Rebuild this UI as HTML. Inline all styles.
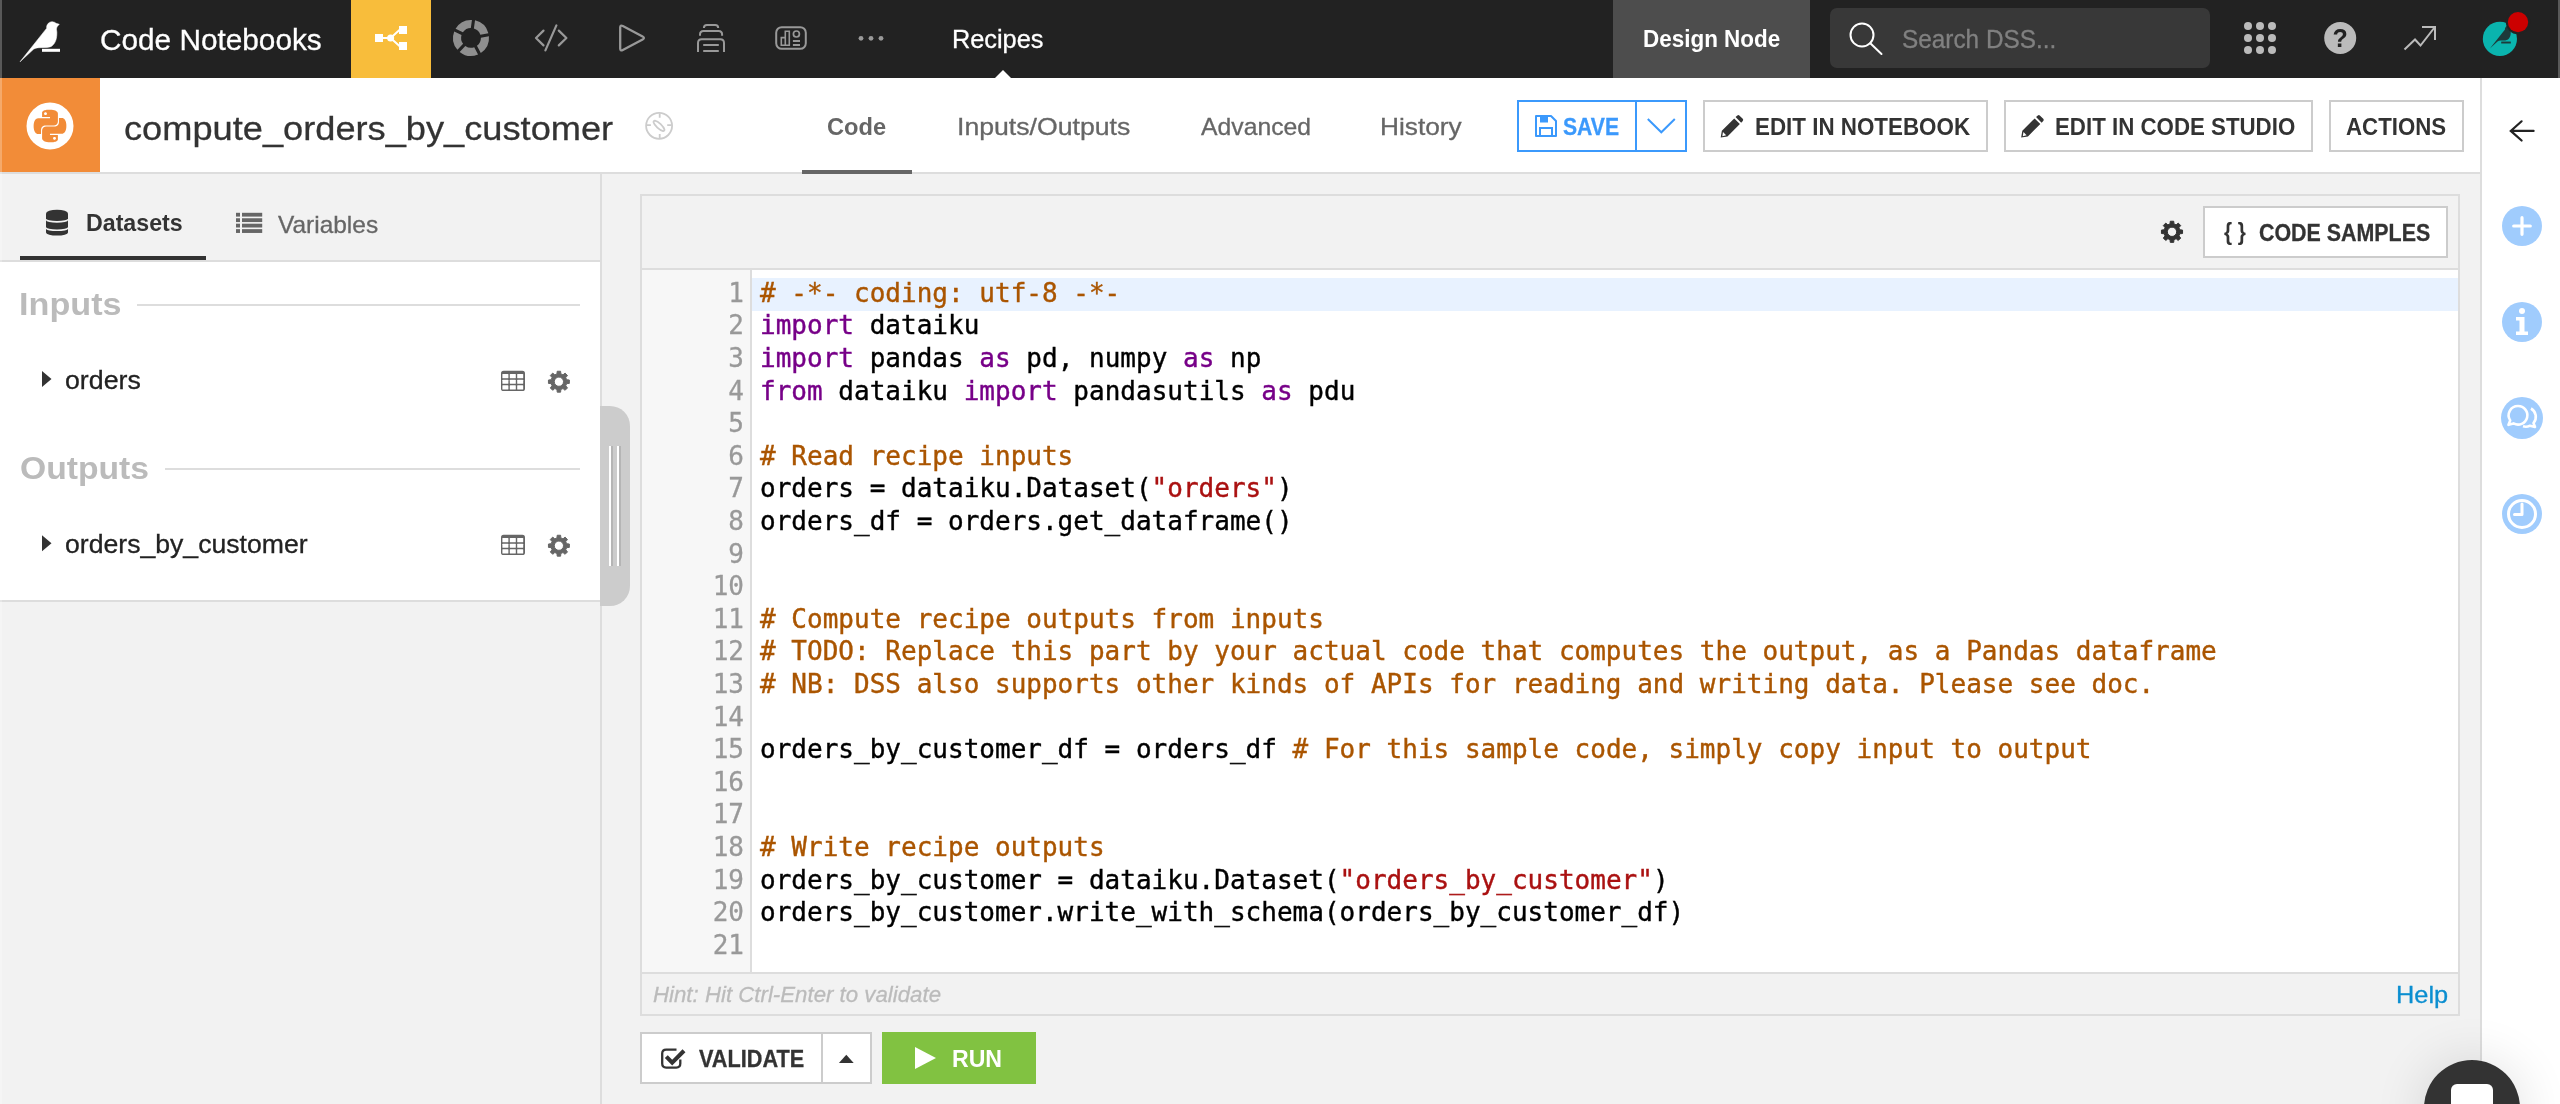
<!DOCTYPE html>
<html lang="en"><head><meta charset="utf-8"><title>compute_orders_by_customer | Dataiku</title>
<style>
*{box-sizing:border-box;margin:0;padding:0}
html,body{width:2560px;height:1104px;overflow:hidden}
#root{position:absolute;left:0;top:0;width:2560px;height:1104px;will-change:transform;overflow:hidden}
body{background:#f2f2f2;font-family:"Liberation Sans",sans-serif;position:relative;color:#333}
.a{position:absolute}
.t{position:absolute;white-space:pre;line-height:normal;transform-origin:0 50%;font-family:"Liberation Sans",sans-serif}
svg{position:absolute;overflow:visible}
#nav{left:0;top:0;width:2560px;height:78px;background:#222}
#flow{left:351px;top:0;width:80px;height:78px;background:#f8bd3b}
#dnode{left:1613px;top:0;width:197px;height:78px;background:#4d4d4d}
#search{left:1830px;top:8px;width:380px;height:60px;background:#383838;border-radius:7px}
#hdr{left:0;top:78px;width:2480px;height:96px;background:#fff;border-bottom:2px solid #ddd}
#ricon{left:0;top:78px;width:100px;height:94px;background:#f28c38}
#rpanel{left:2480px;top:78px;width:80px;height:1026px;background:#fff;border-left:2px solid #ddd}
#tabul{left:802px;top:170px;width:110px;height:4px;background:#666}
.btn{border:2px solid #ccc;background:#fff}
#bsave{left:1517px;top:100px;width:170px;height:52px;border:2px solid #3b99fc;background:#fff}
#bsavediv{left:1635px;top:100px;width:2px;height:52px;background:#3b99fc}
#bnb{left:1703px;top:100px;width:285px;height:52px}
#bcs{left:2004px;top:100px;width:309px;height:52px}
#bact{left:2329px;top:100px;width:135px;height:52px}
#lpanel{left:0;top:174px;width:602px;height:930px;border-right:2px solid #ddd}
#ltabs{left:0;top:174px;width:600px;height:88px;border-bottom:2px solid #ddd}
#ltabul{left:20px;top:256px;width:186px;height:4px;background:#333}
#lbody{left:0;top:262px;width:600px;height:340px;background:#fff;border-bottom:2px solid #ddd}
.hr{height:2px;background:#ddd}
#handle{left:600px;top:406px;width:30px;height:200px;background:#ccc;border-radius:0 20px 20px 0}
.hl{top:446px;height:120px;width:2px}
#ed{left:640px;top:194px;width:1820px;height:822px;border:2px solid #ddd}
#edtb{left:642px;top:268px;width:1816px;height:2px;background:#ddd}
#code{left:642px;top:270px;width:1816px;height:702px;background:#fff;overflow:hidden}
#gutter{left:0;top:0;width:110px;height:702px;background:#f7f7f7;border-right:2px solid #ddd}
#edbb{left:642px;top:972px;width:1816px;height:2px;background:#ddd}
#bcsamp{left:2203px;top:206px;width:245px;height:52px}
.ln{position:absolute;left:0;width:1816px;height:32.6px;font-family:"DejaVu Sans Mono","Liberation Mono",monospace;font-size:26px;line-height:32.6px;letter-spacing:0.011px}
.ln.act{background:linear-gradient(#e8f2ff,#e8f2ff) no-repeat 110px 0/1706px 100%}
.ln .no{position:absolute;left:0;top:-1.2px;-webkit-text-stroke:0.3px;width:102px;text-align:right;color:#999;white-space:pre}
.ln pre{position:absolute;left:118px;top:-1.2px;-webkit-text-stroke:0.4px;font:inherit;color:#000;white-space:pre}
.k{color:#770088}.c{color:#aa5500}.s{color:#aa1111}
#bval{left:640px;top:1032px;width:232px;height:52px}
#bvaldiv{left:821px;top:1032px;width:2px;height:52px;background:#ccc}
#brun{left:882px;top:1032px;width:154px;height:52px;background:#81c241}
#chat{left:2424px;top:1060px;width:96px;height:96px;border-radius:50%;background:#333;box-shadow:0 2px 50px 4px rgba(0,0,0,.11)}
#chati{left:2451px;top:1084px;width:42px;height:40px;border-radius:6px;background:#fff}
.edge{display:none}
#lstrip{left:0;top:0;width:2px;height:1104px;background:rgba(255,255,255,.25)}
#rstrip{left:2558px;top:0;width:2px;height:78px;background:rgba(255,255,255,.25)}
@media (max-width:1400px){html,body{width:1280px;height:552px}#root{zoom:.5}}

</style></head>
<body>
<div id="root">
<div class="a" id="nav"></div>
<div class="a edge" style="left:0"></div><div class="a edge" style="left:2558px"></div>
<div class="a" id="flow"></div>
<div class="a" id="dnode"></div>
<div class="a" id="search"></div>
<div class="a" id="hdr"></div>
<div class="a" id="ricon"></div>
<div class="a" id="tabul"></div>
<div class="a" id="bsave"></div><div class="a" id="bsavediv"></div>
<div class="a btn" id="bnb"></div>
<div class="a btn" id="bcs"></div>
<div class="a btn" id="bact"></div>
<div class="a" id="lpanel"></div>
<div class="a" id="lbody"></div>
<div class="a" id="ltabs"></div>
<div class="a" id="ltabul"></div>
<div class="a hr" style="left:137px;top:304px;width:443px"></div>
<div class="a hr" style="left:165px;top:468px;width:415px"></div>
<div class="a" id="handle"></div>
<div class="a hl" style="left:609px;background:#fff"></div><div class="a hl" style="left:611px;background:#b5b5b5"></div>
<div class="a hl" style="left:617px;background:#fff"></div><div class="a hl" style="left:619px;background:#b5b5b5"></div>
<div class="a" id="ed"></div>
<div class="a" id="edtb"></div>
<div class="a" id="code"><div class="a" id="gutter"></div>
<div class="a" style="left:0;top:8px;width:1816px">
<div class="ln act" style="top:0.0px"><span class="no">1</span><pre><span class="c"># -*- coding: utf-8 -*-</span></pre></div>
<div class="ln" style="top:32.6px"><span class="no">2</span><pre><span class="k">import</span> dataiku</pre></div>
<div class="ln" style="top:65.2px"><span class="no">3</span><pre><span class="k">import</span> pandas <span class="k">as</span> pd, numpy <span class="k">as</span> np</pre></div>
<div class="ln" style="top:97.8px"><span class="no">4</span><pre><span class="k">from</span> dataiku <span class="k">import</span> pandasutils <span class="k">as</span> pdu</pre></div>
<div class="ln" style="top:130.4px"><span class="no">5</span><pre></pre></div>
<div class="ln" style="top:163.0px"><span class="no">6</span><pre><span class="c"># Read recipe inputs</span></pre></div>
<div class="ln" style="top:195.6px"><span class="no">7</span><pre>orders = dataiku.Dataset(<span class="s">&quot;orders&quot;</span>)</pre></div>
<div class="ln" style="top:228.2px"><span class="no">8</span><pre>orders_df = orders.get_dataframe()</pre></div>
<div class="ln" style="top:260.8px"><span class="no">9</span><pre></pre></div>
<div class="ln" style="top:293.4px"><span class="no">10</span><pre></pre></div>
<div class="ln" style="top:326.0px"><span class="no">11</span><pre><span class="c"># Compute recipe outputs from inputs</span></pre></div>
<div class="ln" style="top:358.6px"><span class="no">12</span><pre><span class="c"># TODO: Replace this part by your actual code that computes the output, as a Pandas dataframe</span></pre></div>
<div class="ln" style="top:391.2px"><span class="no">13</span><pre><span class="c"># NB: DSS also supports other kinds of APIs for reading and writing data. Please see doc.</span></pre></div>
<div class="ln" style="top:423.8px"><span class="no">14</span><pre></pre></div>
<div class="ln" style="top:456.4px"><span class="no">15</span><pre>orders_by_customer_df = orders_df <span class="c"># For this sample code, simply copy input to output</span></pre></div>
<div class="ln" style="top:489.0px"><span class="no">16</span><pre></pre></div>
<div class="ln" style="top:521.6px"><span class="no">17</span><pre></pre></div>
<div class="ln" style="top:554.2px"><span class="no">18</span><pre><span class="c"># Write recipe outputs</span></pre></div>
<div class="ln" style="top:586.8px"><span class="no">19</span><pre>orders_by_customer = dataiku.Dataset(<span class="s">&quot;orders_by_customer&quot;</span>)</pre></div>
<div class="ln" style="top:619.4px"><span class="no">20</span><pre>orders_by_customer.write_with_schema(orders_by_customer_df)</pre></div>
<div class="ln" style="top:652.0px"><span class="no">21</span><pre></pre></div>
</div></div>
<div class="a" id="edbb"></div>
<div class="a btn" id="bcsamp"></div>
<div class="a btn" id="bval"></div><div class="a" id="bvaldiv"></div>
<div class="a" id="brun"></div>
<div class="a" id="rpanel"></div>
<div class="a" id="chat"></div><div class="a" id="chati"></div>
<svg width="2560" height="1104" viewBox="0 0 2560 1104" style="left:0;top:0">
<path d="M20,61.8 L46.7,28.2 C46.4,27 46.8,25.6 47.4,24.5 C48.5,22.6 50.4,21.6 52.3,21.7 C54,21.8 55.2,22.5 56,23.3 L59.3,24.2 L57.3,26.5 C56.6,27.5 56.4,28.5 56.5,29.6 C56.9,31.5 57,33 56.8,35 C56.6,37.4 56.3,39 55.7,40.6 C54.8,43 53.5,44.8 52,45.9 C50.5,46.9 49,47.3 47.2,47.4 L39,47.7 C36.6,47.8 35,48.3 33.5,49.3 Z" fill="#fff" stroke="#fff" stroke-width="0.5" stroke-linejoin="round"/>
<rect x="42" y="48.8" width="18" height="3" fill="#fff"/>
<g fill="#fff" stroke="#fff"><rect x="375" y="34" width="8" height="8" stroke="none"/><rect x="399" y="26" width="8" height="8" stroke="none"/><rect x="399" y="42" width="8" height="8" stroke="none"/><circle cx="390.6" cy="38" r="3.5" stroke="none"/><path d="M383,38 H390 M390.6,38 L400,29.5 M390.6,38 L400,46.5" stroke-width="2" fill="none"/></g>
<path d="M475.03,20.36 A18.0,18.0 0 0 1 488.39,33.26 L480.36,34.68 A9.9,9.9 0 0 0 473.89,28.43Z M488.93,36.31 A18.0,18.0 0 0 1 480.79,53.01 L476.95,45.81 A9.9,9.9 0 0 0 480.90,37.72Z M478.05,54.46 A18.0,18.0 0 0 1 459.66,51.88 L465.32,46.01 A9.9,9.9 0 0 0 474.23,47.26Z M457.43,49.72 A18.0,18.0 0 0 1 454.20,31.43 L461.53,35.00 A9.9,9.9 0 0 0 463.10,43.86Z M455.56,28.65 A18.0,18.0 0 0 1 471.96,19.93 L470.83,28.00 A9.9,9.9 0 0 0 462.89,32.23Z" fill="#8f8f8f"/>
<g fill="none" stroke="#999" stroke-width="2.2" stroke-linecap="round" stroke-linejoin="round"><path d="M543.5,30.6 L536,38 L543.5,45.4"/><path d="M556.4,25.4 L545.4,50.4"/><path d="M558.8,30.6 L566.4,38 L558.8,45.4"/></g>
<path d="M620.2,27.5 Q620.2,24.6 622.8,26 L642.6,36.5 Q645.3,38 642.6,39.5 L622.8,50 Q620.2,51.4 620.2,48.5 Z" fill="none" stroke="#999" stroke-width="2.3" stroke-linejoin="round"/>
<g fill="none" stroke="#999" stroke-width="2"><path d="M703.9,28 V27.9 Q703.9,24.9 706.9,24.9 H715.2 Q718.2,24.9 718.2,27.9 V28"/><path d="M700,35.8 V34.5 Q700,31 703.5,31 H718.6 Q722.1,31 722.1,34.5 V35.8"/><path d="M698,52 V43 Q698,39.3 701.7,39.3 H720.3 Q724,39.3 724,43 V52"/><path d="M703.2,45 H718.8 M703.2,51 H718.8"/></g>
<g fill="none" stroke="#999"><rect x="776.2" y="27.2" width="29.6" height="21.6" rx="5.5" stroke-width="2"/><path d="M781.3,45.2 V37.6 H785.3 V31.3 H789.3 V45.2 Z M785.3,37.6 V45.2" stroke-width="1.6"/><circle cx="796.4" cy="34" r="3" stroke-width="1.7"/><path d="M792.9,41 H800 M792.9,45 H800" stroke-width="2"/></g>
<g fill="#999"><circle cx="861" cy="38.3" r="2.4"/><circle cx="871" cy="38.3" r="2.4"/><circle cx="881" cy="38.3" r="2.4"/></g>
<path d="M995,78 L1003,70 L1011,78Z" fill="#fff"/>
<g fill="none" stroke="#fff" stroke-width="2"><circle cx="1862" cy="35" r="11.5"/><path d="M1870.3,43.3 L1881.5,54" stroke-linecap="round"/></g>
<g fill="#bbb"><circle cx="2248" cy="26" r="4"/><circle cx="2248" cy="38" r="4"/><circle cx="2248" cy="50" r="4"/><circle cx="2260" cy="26" r="4"/><circle cx="2260" cy="38" r="4"/><circle cx="2260" cy="50" r="4"/><circle cx="2272" cy="26" r="4"/><circle cx="2272" cy="38" r="4"/><circle cx="2272" cy="50" r="4"/></g>
<circle cx="2340.2" cy="38" r="16" fill="#bbb"/>
<text x="2340.2" y="47" font-family="Liberation Sans, sans-serif" font-weight="700" font-size="25" fill="#222" text-anchor="middle">?</text>
<g fill="none" stroke="#bbb" stroke-width="2"><path d="M2404.5,49.5 L2415,39.5 L2420.5,45.5 L2434.5,27.5"/><path d="M2422,27 H2435 V40"/></g>
<circle cx="2499.9" cy="38.9" r="17.1" fill="#0ab4ae"/>
<g transform="translate(2478.6,13.6) scale(0.565)" fill="#1d3a3a"><path d="M20,61.8 L46.7,28.2 C46.4,27 46.8,25.6 47.4,24.5 C48.5,22.6 50.4,21.6 52.3,21.7 C54,21.8 55.2,22.5 56,23.3 L59.3,24.2 L57.3,26.5 C56.6,27.5 56.4,28.5 56.5,29.6 C56.9,31.5 57,33 56.8,35 C56.6,37.4 56.3,39 55.7,40.6 C54.8,43 53.5,44.8 52,45.9 C50.5,46.9 49,47.3 47.2,47.4 L39,47.7 C36.6,47.8 35,48.3 33.5,49.3 Z"/><rect x="40" y="49.5" width="17" height="3.4"/></g>
<circle cx="2518" cy="22.1" r="12.2" fill="#222"/><circle cx="2518" cy="22.1" r="10.2" fill="#cc0000"/>
<circle cx="50" cy="126" r="23.5" fill="#fff"/>
<g transform="translate(33.7,109.7) scale(1.358)"><path d="M14.25.18l.9.2.73.26.59.3.45.32.34.34.25.34.16.33.1.3.04.26.02.2-.01.13V8.5l-.05.63-.13.55-.21.46-.26.38-.3.31-.33.25-.35.19-.35.14-.33.1-.3.07-.26.04-.21.02H8.77l-.69.05-.59.14-.5.22-.41.27-.33.32-.27.35-.2.36-.15.37-.1.35-.07.32-.04.27-.02.21v3.06H3.17l-.21-.03-.28-.07-.32-.12-.35-.18-.36-.26-.36-.36-.35-.46-.32-.59-.28-.73-.21-.88-.14-1.05-.05-1.23.06-1.22.16-1.04.24-.87.32-.71.36-.57.4-.44.42-.33.42-.24.4-.16.36-.1.32-.05.24-.01h.16l.06.01h8.16v-.83H6.18l-.01-2.75-.02-.37.05-.34.11-.31.17-.28.25-.26.31-.23.38-.2.44-.18.51-.15.58-.12.64-.1.71-.06.77-.04.84-.02 1.27.05zm-6.3 1.98l-.23.33-.08.41.08.41.23.34.33.22.41.09.41-.09.33-.22.23-.34.08-.41-.08-.41-.23-.33-.33-.22-.41-.09-.41.09zm13.09 3.95l.28.06.32.12.35.18.36.27.36.35.35.47.32.59.28.73.21.88.14 1.04.05 1.23-.06 1.23-.16 1.04-.24.86-.32.71-.36.57-.4.45-.42.33-.42.24-.4.16-.36.09-.32.05-.24.02-.16-.01h-8.22v.82h5.84l.01 2.76.02.36-.05.34-.11.31-.17.29-.25.25-.31.24-.38.2-.44.17-.51.15-.58.13-.64.09-.71.07-.77.04-.84.01-1.27-.04-1.07-.14-.9-.2-.73-.25-.59-.3-.45-.33-.34-.34-.25-.34-.16-.33-.1-.3-.04-.25-.02-.2.01-.13v-5.34l.05-.64.13-.54.21-.46.26-.38.3-.32.33-.24.35-.2.35-.14.33-.1.3-.06.26-.04.21-.02.13-.01h5.84l.69-.05.59-.14.5-.21.41-.28.33-.32.27-.35.2-.36.15-.36.1-.35.07-.32.04-.28.02-.21V6.07h2.09l.14.01zm-6.47 14.25l-.23.33-.08.41.08.41.23.33.33.23.41.08.41-.08.33-.23.23-.33.08-.41-.08-.41-.23-.33-.33-.23-.41-.08-.41.08z" fill="#f28c38"/></g>
<g fill="none" stroke="#ccc" stroke-width="1.8"><circle cx="659.1" cy="125.8" r="13"/><path d="M659.7,113.6 v4.2 M659.7,134 v4.2 M646.6,125.2 h4.3 M667.2,125.2 h4.3" stroke-width="1.8"/><path d="M-6.5,-1 C-3.5,-2.9 3.5,-2.9 6.5,-1 A1.25,1.25 0 0 1 6.5,1 C3.5,2.9 -3.5,2.9 -6.5,1 A1.25,1.25 0 0 1 -6.5,-1Z" transform="translate(659,125.9) rotate(43)" stroke-width="1.8" stroke-linejoin="round"/></g>
<g fill="none" stroke="#3b99fc" stroke-width="2"><path d="M1536,116 H1551 L1556,121 V136 H1536 Z" stroke-linejoin="round"/><path d="M1540,136 V128 H1552 V136"/></g><rect x="1540" y="116" width="8" height="6.5" fill="#3b99fc"/>
<path d="M1647.8,119 L1661.3,132.3 L1674.8,119" fill="none" stroke="#3b99fc" stroke-width="2"/>
<path d="M1720.70,137.50 L1721.83,130.75 L1734.20,118.38 L1739.83,124.00 L1727.45,136.38 Z M1735.55,117.03 L1737.35,115.45 Q1738.48,114.55 1739.60,115.67 L1742.75,118.83 Q1743.65,119.95 1742.75,121.08 L1741.17,122.65 Z" fill="#333"/><path d="M1722.95,132.10 L1726.10,135.25 L1722.28,136.15Z" fill="#fff"/>
<path d="M2021.20,137.50 L2022.33,130.75 L2034.70,118.38 L2040.33,124.00 L2027.95,136.38 Z M2036.05,117.03 L2037.85,115.45 Q2038.98,114.55 2040.10,115.67 L2043.25,118.83 Q2044.15,119.95 2043.25,121.08 L2041.67,122.65 Z" fill="#333"/><path d="M2023.45,132.10 L2026.60,135.25 L2022.78,136.15Z" fill="#fff"/>
<path d="M2533.6,130.9 H2511 M2521.6,121.3 L2510.8,130.9 L2521.6,140.5" fill="none" stroke="#222" stroke-width="2.2" stroke-linecap="round" stroke-linejoin="miter"/>
<circle cx="2522" cy="226" r="20" fill="#a0ccfd"/><path d="M2513.7,226 H2530.3 M2522,217.7 V234.3" stroke="#fff" stroke-width="3.2" stroke-linecap="round"/>
<circle cx="2522" cy="322" r="20" fill="#a0ccfd"/><circle cx="2522" cy="311" r="3" fill="#fff"/><path d="M2516,317 H2524.5 V331.5 H2528 V335 H2516 V331.5 H2519.5 V320.5 H2516Z" fill="#fff"/>
<circle cx="2522" cy="418" r="21" fill="#a0ccfd"/><g fill="none" stroke="#fff" stroke-width="2.6" stroke-linejoin="round"><path d="M2518,406 a9.3,9.3 0 1 1 -4.5,17.4 l-5,1.4 l1.7,-4.4 a9.3,9.3 0 0 1 7.8,-14.4z"/><path d="M2531,408.5 a9.5,9.5 0 0 1 2.5,14.5 l1.5,4 l-5,-1.3 a9.5,9.5 0 0 1 -7,0.6"/></g>
<circle cx="2522" cy="514" r="20" fill="#a0ccfd"/><circle cx="2522" cy="514" r="13.5" fill="none" stroke="#fff" stroke-width="3"/><path d="M2522,504 V514.5 H2514.5" fill="none" stroke="#fff" stroke-width="3" stroke-linecap="round" stroke-linejoin="round"/>
<g fill="#333"><path d="M46,213.5 A11,3.8 0 0 1 68,213.5 V218.6 A11,2.4 0 0 1 46,218.6Z"/><path d="M46,220.3 A11,2.4 0 0 0 68,220.3 V227 A11,2.4 0 0 1 46,227Z"/><path d="M46,228.7 A11,2.4 0 0 0 68,228.7 V232.6 A11,3 0 0 1 46,232.6Z"/></g>
<g fill="#666"><rect x="236" y="212.80" width="4" height="3.8"/><rect x="242" y="212.80" width="20.2" height="3.8"/><rect x="236" y="218.25" width="4" height="3.8"/><rect x="242" y="218.25" width="20.2" height="3.8"/><rect x="236" y="223.70" width="4" height="3.8"/><rect x="242" y="223.70" width="20.2" height="3.8"/><rect x="236" y="229.15" width="4" height="3.8"/><rect x="242" y="229.15" width="20.2" height="3.8"/></g>
<path d="M42,371 L51.5,379 L42,387Z" fill="#333"/>
<path d="M42,535.3 L51.5,543.3 L42,551.3Z" fill="#333"/>
<rect x="501" y="370.7" width="24" height="20.3" rx="2.6" fill="#666"/><rect x="502.40" y="374.10" width="6.0" height="4.1" rx="0.5" fill="#fff"/><rect x="509.80" y="374.10" width="6.0" height="4.1" rx="0.5" fill="#fff"/><rect x="517.20" y="374.10" width="6.0" height="4.1" rx="0.5" fill="#fff"/><rect x="502.40" y="379.70" width="6.0" height="4.1" rx="0.5" fill="#fff"/><rect x="509.80" y="379.70" width="6.0" height="4.1" rx="0.5" fill="#fff"/><rect x="517.20" y="379.70" width="6.0" height="4.1" rx="0.5" fill="#fff"/><rect x="502.40" y="385.30" width="6.0" height="4.1" rx="0.5" fill="#fff"/><rect x="509.80" y="385.30" width="6.0" height="4.1" rx="0.5" fill="#fff"/><rect x="517.20" y="385.30" width="6.0" height="4.1" rx="0.5" fill="#fff"/>
<rect x="501" y="534.7" width="24" height="20.3" rx="2.6" fill="#666"/><rect x="502.40" y="538.10" width="6.0" height="4.1" rx="0.5" fill="#fff"/><rect x="509.80" y="538.10" width="6.0" height="4.1" rx="0.5" fill="#fff"/><rect x="517.20" y="538.10" width="6.0" height="4.1" rx="0.5" fill="#fff"/><rect x="502.40" y="543.70" width="6.0" height="4.1" rx="0.5" fill="#fff"/><rect x="509.80" y="543.70" width="6.0" height="4.1" rx="0.5" fill="#fff"/><rect x="517.20" y="543.70" width="6.0" height="4.1" rx="0.5" fill="#fff"/><rect x="502.40" y="549.30" width="6.0" height="4.1" rx="0.5" fill="#fff"/><rect x="509.80" y="549.30" width="6.0" height="4.1" rx="0.5" fill="#fff"/><rect x="517.20" y="549.30" width="6.0" height="4.1" rx="0.5" fill="#fff"/>
<path d="M556.94,373.95 L557.20,371.24 L560.60,371.24 L560.86,373.95 L562.99,374.84 L565.10,373.10 L567.50,375.50 L565.76,377.61 L566.65,379.74 L569.36,380.00 L569.36,383.40 L566.65,383.66 L565.76,385.79 L567.50,387.90 L565.10,390.30 L562.99,388.56 L560.86,389.45 L560.60,392.16 L557.20,392.16 L556.94,389.45 L554.81,388.56 L552.70,390.30 L550.30,387.90 L552.04,385.79 L551.15,383.66 L548.44,383.40 L548.44,380.00 L551.15,379.74 L552.04,377.61 L550.30,375.50 L552.70,373.10 L554.81,374.84Z M563.51,381.70 A4.61,4.61 0 1 0 554.29,381.70 A4.61,4.61 0 1 0 563.51,381.70Z" fill="#666" fill-rule="evenodd" stroke="#666" stroke-width="1.0" stroke-linejoin="round"/>
<path d="M556.94,537.95 L557.20,535.24 L560.60,535.24 L560.86,537.95 L562.99,538.84 L565.10,537.10 L567.50,539.50 L565.76,541.61 L566.65,543.74 L569.36,544.00 L569.36,547.40 L566.65,547.66 L565.76,549.79 L567.50,551.90 L565.10,554.30 L562.99,552.56 L560.86,553.45 L560.60,556.16 L557.20,556.16 L556.94,553.45 L554.81,552.56 L552.70,554.30 L550.30,551.90 L552.04,549.79 L551.15,547.66 L548.44,547.40 L548.44,544.00 L551.15,543.74 L552.04,541.61 L550.30,539.50 L552.70,537.10 L554.81,538.84Z M563.51,545.70 A4.61,4.61 0 1 0 554.29,545.70 A4.61,4.61 0 1 0 563.51,545.70Z" fill="#666" fill-rule="evenodd" stroke="#666" stroke-width="1.0" stroke-linejoin="round"/>
<path d="M2170.02,223.98 L2170.28,221.24 L2173.72,221.24 L2173.98,223.98 L2176.13,224.87 L2178.26,223.12 L2180.68,225.54 L2178.93,227.67 L2179.82,229.82 L2182.56,230.08 L2182.56,233.52 L2179.82,233.78 L2178.93,235.93 L2180.68,238.06 L2178.26,240.48 L2176.13,238.73 L2173.98,239.62 L2173.72,242.36 L2170.28,242.36 L2170.02,239.62 L2167.87,238.73 L2165.74,240.48 L2163.32,238.06 L2165.07,235.93 L2164.18,233.78 L2161.44,233.52 L2161.44,230.08 L2164.18,229.82 L2165.07,227.67 L2163.32,225.54 L2165.74,223.12 L2167.87,224.87Z M2176.64,231.80 A4.64,4.64 0 1 0 2167.36,231.80 A4.64,4.64 0 1 0 2176.64,231.80Z" fill="#333" fill-rule="evenodd" stroke="#333" stroke-width="1.0" stroke-linejoin="round"/>
<path d="M680.3,1059.5 V1063.6 Q680.3,1067.6 676.3,1067.6 H666.2 Q662.2,1067.6 662.2,1063.6 V1053.6 Q662.2,1049.6 666.2,1049.6 H676.5" fill="none" stroke="#333" stroke-width="2.3"/><path d="M666.3,1056.6 L672.2,1062.6 L684,1050.8" fill="none" stroke="#333" stroke-width="4.1"/>
<path d="M838.9,1063 L846.3,1054.8 L853.7,1063Z" fill="#333"/>
<path d="M915,1047 L936,1058 L915,1069Z" fill="#fff"/>
</svg>
<div class="a" id="lstrip"></div><div class="a" id="rstrip"></div>
<span class="t" id="t0" style="left:99.63px;top:23.00px;font-size:30px;font-weight:400;color:#fff;-webkit-text-stroke:0.3px;transform:scaleX(0.9922);">Code Notebooks</span>
<span class="t" id="t1" style="left:952.21px;top:24.00px;font-size:26px;font-weight:400;color:#fff;-webkit-text-stroke:0.3px;transform:scaleX(0.9732);">Recipes</span>
<span class="t" id="t2" style="left:1642.96px;top:25.00px;font-size:24.5px;font-weight:700;color:#fff;transform:scaleX(0.9166);">Design Node</span>
<span class="t" id="t3" style="left:1901.96px;top:24.00px;font-size:26px;font-weight:400;color:#808080;-webkit-text-stroke:0.3px;transform:scaleX(0.9364);">Search DSS...</span>
<span class="t" id="t4" style="left:123.57px;top:110.00px;font-size:33.5px;font-weight:400;color:#333;-webkit-text-stroke:0.3px;transform:scaleX(1.0811);">compute_orders_by_customer</span>
<span class="t" id="t5" style="left:826.82px;top:113.00px;font-size:24px;font-weight:700;color:#666;transform:scaleX(0.9858);">Code</span>
<span class="t" id="t6" style="left:956.72px;top:113.00px;font-size:24px;font-weight:400;color:#666;-webkit-text-stroke:0.3px;transform:scaleX(1.1103);">Inputs/Outputs</span>
<span class="t" id="t7" style="left:1200.72px;top:113.00px;font-size:24px;font-weight:400;color:#666;-webkit-text-stroke:0.3px;transform:scaleX(1.0307);">Advanced</span>
<span class="t" id="t8" style="left:1379.83px;top:113.00px;font-size:24px;font-weight:400;color:#666;-webkit-text-stroke:0.3px;transform:scaleX(1.0935);">History</span>
<span class="t" id="t9" style="left:1562.96px;top:112.50px;font-size:24px;font-weight:700;color:#3b99fc;-webkit-text-stroke:0.3px;transform:scaleX(0.8820);">SAVE</span>
<span class="t" id="t10" style="left:1755.48px;top:112.50px;font-size:24px;font-weight:700;color:#333;transform:scaleX(0.9323);">EDIT IN NOTEBOOK</span>
<span class="t" id="t11" style="left:2054.53px;top:112.50px;font-size:24px;font-weight:700;color:#333;transform:scaleX(0.9287);">EDIT IN CODE STUDIO</span>
<span class="t" id="t12" style="left:2345.81px;top:112.50px;font-size:24px;font-weight:700;color:#333;transform:scaleX(0.9269);">ACTIONS</span>
<span class="t" id="t13" style="left:86.17px;top:209.00px;font-size:24px;font-weight:700;color:#333;transform:scaleX(0.9664);">Datasets</span>
<span class="t" id="t14" style="left:277.71px;top:211.00px;font-size:24px;font-weight:400;color:#666;-webkit-text-stroke:0.3px;transform:scaleX(1.0189);">Variables</span>
<span class="t" id="t15" style="left:19.19px;top:286.70px;font-size:31px;font-weight:700;color:#bbb;transform:scaleX(1.1027);">Inputs</span>
<span class="t" id="t16" style="left:20.04px;top:450.50px;font-size:31px;font-weight:700;color:#bbb;transform:scaleX(1.0855);">Outputs</span>
<span class="t" id="t17" style="left:65.36px;top:364.70px;font-size:26px;font-weight:400;color:#222;-webkit-text-stroke:0.3px;transform:scaleX(1.0279);">orders</span>
<span class="t" id="t18" style="left:65.38px;top:528.50px;font-size:26px;font-weight:400;color:#222;-webkit-text-stroke:0.3px;transform:scaleX(1.0237);">orders_by_customer</span>
<span class="t" id="t19" style="left:2223.62px;top:218.60px;font-size:23px;font-weight:700;color:#333;transform:scaleX(0.9026);">{ }</span>
<span class="t" id="t20" style="left:2258.94px;top:218.80px;font-size:24px;font-weight:700;color:#333;-webkit-text-stroke:0.3px;transform:scaleX(0.8914);">CODE SAMPLES</span>
<span class="t" id="t21" style="left:652.84px;top:982.00px;font-size:22.5px;font-weight:400;color:#bbb;font-style:italic;-webkit-text-stroke:0.3px;transform:scaleX(0.9885);">Hint: Hit Ctrl-Enter to validate</span>
<span class="t" id="t22" style="left:2396.38px;top:980.80px;font-size:24px;font-weight:400;color:#0b8ed0;-webkit-text-stroke:0.3px;transform:scaleX(1.0558);">Help</span>
<span class="t" id="t23" style="left:698.94px;top:1045.00px;font-size:24px;font-weight:700;color:#333;-webkit-text-stroke:0.3px;transform:scaleX(0.9030);">VALIDATE</span>
<span class="t" id="t24" style="left:951.73px;top:1045.00px;font-size:24px;font-weight:700;color:#fff;transform:scaleX(0.9625);">RUN</span>

</div>
</body></html>
